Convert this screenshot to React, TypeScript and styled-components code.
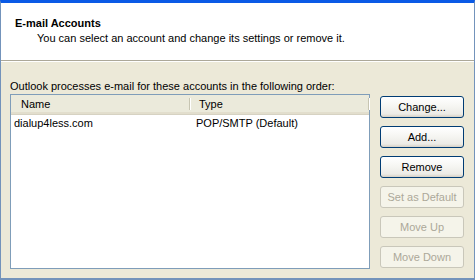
import React from "react";
import styled, { createGlobalStyle } from "styled-components";

const Global = createGlobalStyle`
  html, body { margin: 0; padding: 0; background: #ece9d8; }
  body { font-family: Tahoma, "Liberation Sans", Arial, sans-serif; font-size: 11px; color: #000; }
`;

const Frame = styled.div`
  width: 475px;
  height: 280px;
  box-sizing: border-box;
  display: flex;
  flex-direction: column;
  border-left: 1px solid #7393bb;
  border-right: 1px solid #7393bb;
  border-bottom: 2px solid #7393bb;
  border-top: 3px solid #0a5ae6;
  background: #ece9d8;
`;

const Header = styled.div`
  background: #fff;
  height: 58px;
  box-sizing: border-box;
  padding: 13px 0 0 14px;
  border-bottom: 1px solid #aca899;
  box-shadow: 0 1px 0 #fff;
`;

const Title = styled.div`
  font-weight: bold;
  font-size: 11px;
  line-height: 14px;
`;

const Subtitle = styled.div`
  padding-left: 22px;
  margin-top: 1px;
  line-height: 14px;
`;

const Body = styled.div`
  flex: 1;
  padding: 18px 10px 0 9px;
  display: flex;
  flex-direction: column;
`;

const Label = styled.div`
  line-height: 14px;
  height: 14px;
  margin-bottom: 1px;
`;

const Main = styled.div`
  display: flex;
  gap: 10px;
  flex: 1;
`;

const ListBox = styled.div`
  width: 360px;
  height: 175px;
  box-sizing: border-box;
  border: 1px solid #7f9db9;
  background: #fff;
  display: flex;
  flex-direction: column;
`;

const HeadRow = styled.div`
  display: flex;
  height: 19px;
  background: #ebeadb;
  border-bottom: 1px solid #d6d2c2;
  box-shadow: inset 0 -2px 0 #e2decd;
`;

const HeadCell = styled.div<{ $w?: number }>`
  ${(p) => (p.$w ? `width: ${p.$w}px;` : "flex: 1;")}
  box-sizing: border-box;
  padding-left: ${(p) => (p.$w ? 10 : 9)}px;
  line-height: 19px;
  position: relative;
  &::after {
    content: "";
    position: absolute;
    right: 0;
    top: 3px;
    bottom: 4px;
    width: 1px;
    background: #c7c5b2;
    box-shadow: 1px 0 0 #fff;
  }
`;

const Row = styled.div`
  display: flex;
  height: 16px;
  line-height: 16px;
`;

const Cell = styled.div<{ $w?: number }>`
  ${(p) => (p.$w ? `width: ${p.$w}px;` : "flex: 1;")}
  padding-left: ${(p) => (p.$w ? 3 : 6)}px;
  box-sizing: border-box;
  white-space: nowrap;
`;

const Buttons = styled.div`
  display: flex;
  flex-direction: column;
  gap: 8px;
  padding-top: 2px;
`;

const Button = styled.button<{ $disabled?: boolean }>`
  width: 84px;
  height: 22px;
  box-sizing: border-box;
  font: inherit;
  padding: 0;
  border-radius: 3px;
  border: 1px solid ${(p) => (p.$disabled ? "#c9c7ba" : "#003c74")};
  color: ${(p) => (p.$disabled ? "#aca899" : "#000")};
  background: ${(p) =>
    p.$disabled
      ? "#f5f4ea"
      : "linear-gradient(to bottom, #ffffff 0%, #f7f7f4 40%, #ecebe6 85%, #d6d0c5 100%)"};
`;

export default function App() {
  return (
    <>
      <Global />
      <Frame>
        <Header>
          <Title>E-mail Accounts</Title>
          <Subtitle>You can select an account and change its settings or remove it.</Subtitle>
        </Header>
        <Body>
          <Label>Outlook processes e-mail for these accounts in the following order:</Label>
          <Main>
            <ListBox>
              <HeadRow>
                <HeadCell $w={179}>Name</HeadCell>
                <HeadCell>Type</HeadCell>
              </HeadRow>
              <Row>
                <Cell $w={179}>dialup4less.com</Cell>
                <Cell>POP/SMTP (Default)</Cell>
              </Row>
            </ListBox>
            <Buttons>
              <Button>Change...</Button>
              <Button>Add...</Button>
              <Button>Remove</Button>
              <Button $disabled disabled>Set as Default</Button>
              <Button $disabled disabled>Move Up</Button>
              <Button $disabled disabled>Move Down</Button>
            </Buttons>
          </Main>
        </Body>
      </Frame>
    </>
  );
}
